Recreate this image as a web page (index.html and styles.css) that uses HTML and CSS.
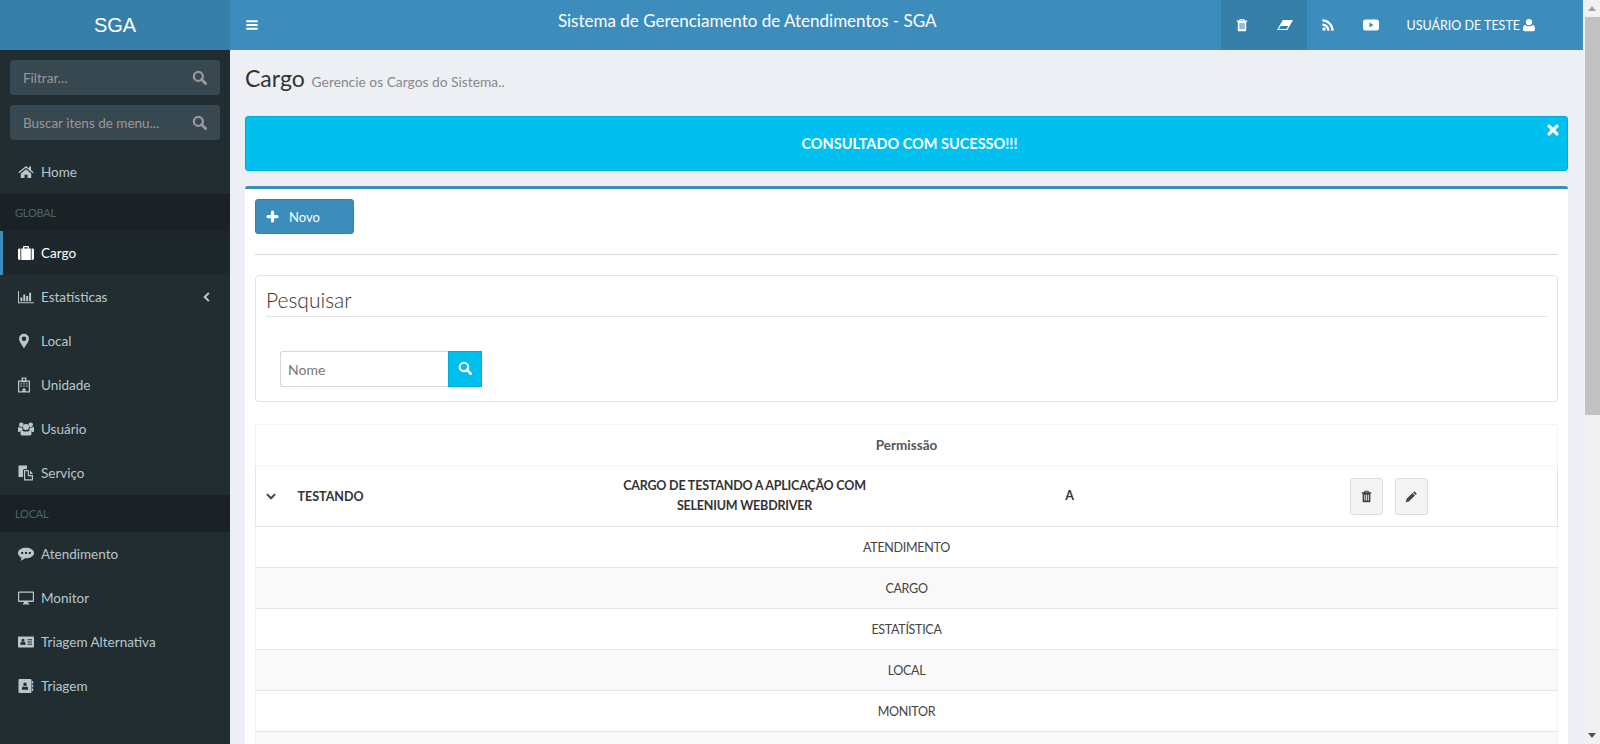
FILE: index.html
```html
<!DOCTYPE html>
<html>
  <head>
    <title>SGA</title>
    <link rel="stylesheet" href="styles.css">
  </head>
  <body>
    <svg class="sprite" xmlns="http://www.w3.org/2000/svg">
      <symbol id="i-search" viewBox="0 0 16 16"><circle cx="6.800" cy="6.800" r="4.800" fill="none" stroke="currentColor" stroke-width="2.400"/><path d="M10.200 10.200l4.300 4.300" stroke="currentColor" stroke-width="3" stroke-linecap="round"/></symbol>
      <symbol id="i-bars" viewBox="0 0 16 16"><path fill="currentColor" d="M1.500 2.500h13v2.400h-13zM1.500 6.800h13v2.400h-13zM1.500 11.100h13v2.400h-13z"/></symbol>
      <symbol id="i-trash" viewBox="0 0 16 16"><path fill="currentColor" fill-rule="evenodd" d="M5.600 1h4.800l1 1.800H14v1.500h-1.200V14a1 1 0 0 1-1 1H4.200a1 1 0 0 1-1-1V4.300H2V2.800h2.600zM6.300 2.800h3.400l-.4-.7H6.700zM5.300 5.800v7h1.100v-7zM7.500 5.800v7h1.100v-7zM9.700 5.800v7h1.100v-7z"/></symbol>
      <symbol id="i-eraser" viewBox="0 0 16 16"><path fill="currentColor" fill-rule="evenodd" d="M5.800 3H16L10.400 13H0zM3.600 9L1.900 12h7.700l1.700-3z"/></symbol>
      <symbol id="i-rss" viewBox="0 0 16 16"><circle cx="3.500" cy="12.500" r="2" fill="currentColor"/><path fill="currentColor" d="M1.500 6.200v2.600a5.700 5.700 0 0 1 5.700 5.700h2.600a8.300 8.300 0 0 0-8.300-8.300zM1.500 1.500v2.600a10.400 10.400 0 0 1 10.400 10.400h2.600a13 13 0 0 0-13-13z"/></symbol>
      <symbol id="i-youtube" viewBox="0 0 16 16"><path fill="currentColor" fill-rule="evenodd" d="M2.500 2.500h11A2.500 2.500 0 0 1 16 5v6a2.500 2.500 0 0 1-2.500 2.500h-11A2.500 2.500 0 0 1 0 11V5a2.500 2.500 0 0 1 2.500-2.500zM6.400 5.600v4.800L10.600 8z"/></symbol>
      <symbol id="i-user" viewBox="0 0 16 16"><circle cx="8" cy="4.600" r="3.600" fill="currentColor"/><path fill="currentColor" d="M3.600 7.600c1 1.200 2.700 1.900 4.400 1.900s3.400-.7 4.400-1.900c1.500.5 2.600 2.300 2.600 5.200 0 1.500-1 2.200-2.300 2.200H3.300C2 15 1 14.300 1 12.800c0-2.900 1.100-4.700 2.600-5.200z"/></symbol>
      <symbol id="i-times" viewBox="0 0 16 16"><path d="M3.500 3.500l9 9M12.500 3.500l-9 9" stroke="currentColor" stroke-width="3.800" stroke-linecap="round"/></symbol>
      <symbol id="i-home" viewBox="0 0 16 16"><path fill="currentColor" d="M8 2L.3 8.300l.9 1L8 3.700l6.800 5.600.9-1L13 6.100V2.600h-2v1.800zM2.800 9.500V14h3.700v-3.300h3V14h3.700V9.500L8 5.200z"/></symbol>
      <symbol id="i-suitcase" viewBox="0 0 16 16"><path fill="currentColor" fill-rule="evenodd" d="M5 3.500V2A1 1 0 0 1 6 1h4a1 1 0 0 1 1 1v1.500h1.800V15H3.200V3.500zM6.200 2.200v1.300h3.600V2.200zM2.400 3.500V15H1.400A1.400 1.400 0 0 1 0 13.600V4.900A1.400 1.400 0 0 1 1.400 3.500zM13.600 3.500h1A1.400 1.400 0 0 1 16 4.900v8.700a1.400 1.400 0 0 1-1.400 1.400h-1z"/></symbol>
      <symbol id="i-chart" viewBox="0 0 16 16"><path fill="currentColor" d="M0 2h1v11.200h15v1H0zM2.400 8.500h2v3.700h-2zM5.300 5.500h2v6.700h-2zM8.200 7h2v5.200h-2zM11.100 3.800h2v8.400h-2z"/></symbol>
      <symbol id="i-marker" viewBox="0 0 16 16"><path fill="currentColor" fill-rule="evenodd" d="M6 .8a5 5 0 0 0-5 5c0 2.800 3.200 7 5 9.400 1.800-2.400 5-6.600 5-9.400a5 5 0 0 0-5-5zM6 3.500a2.300 2.300 0 1 1 0 4.600 2.300 2.300 0 0 1 0-4.600z"/></symbol>
      <symbol id="i-hospital" viewBox="0 0 16 16"><path fill="currentColor" fill-rule="evenodd" d="M3.500.5h5V3.500H12v12H0V3.500h3.500zM5.400 1.200v.8h-.8v.8h.8v.8h1.200v-.8h.8V2h-.8v-.8zM1.200 4.700v9.600h3.300v-2.800h3v2.800h3.300V4.700H8.500v.6h-5v-.6zM2.400 6.300h1.300v1.200H2.400zM5.300 6.300h1.400v1.200H5.300zM8.300 6.300h1.300v1.200H8.300zM2.400 8.600h1.300v1.200H2.400zM5.300 8.600h1.400v1.200H5.300zM8.300 8.600h1.300v1.200H8.300z"/></symbol>
      <symbol id="i-users" viewBox="0 0 16 16"><circle cx="8" cy="6" r="3" fill="currentColor"/><circle cx="3.300" cy="3.800" r="2.300" fill="currentColor"/><circle cx="12.700" cy="3.800" r="2.300" fill="currentColor"/><path fill="currentColor" d="M3.800 9c1 1 2.500 1.500 4.200 1.500s3.200-.5 4.200-1.500c1 .3 1.300 1.800 1.300 3.500 0 1.300-.6 2-1.500 2H4c-.9 0-1.500-.7-1.500-2 0-1.700.3-3.200 1.300-3.500zM0 6.800c0-.6.300-1 1-.8.700.4 1.400.6 2.200.6l1 .1c.1 1 .4 1.500.9 2-1.700.2-2.700 1-3 2.300H1c-.6 0-1-.4-1-1zM16 6.800c0-.6-.3-1-1-.8-.7.400-1.400.6-2.200.6l-1 .1c-.1 1-.4 1.500-.9 2 1.700.2 2.700 1 3 2.300h1.100c.6 0 1-.4 1-1z"/></symbol>
      <symbol id="i-files" viewBox="0 0 16 16"><path fill="currentColor" fill-rule="evenodd" d="M.5.500h8.500v3.500H6.500A1.500 1.500 0 0 0 5 5.500V12H.5zM6 5h5v5h4v5.500H6zM7.200 6.200v8.100h6.600V11.200H9.800V6.200zM12 5.200l3 3.800h-3z"/></symbol>
      <symbol id="i-comment" viewBox="0 0 16 16"><path fill="currentColor" fill-rule="evenodd" d="M8 1.800c4.200 0 8 2 8 5.200s-3.800 5.300-8 5.300h-1C5.800 13.500 4 14.500 2.200 14.700c.8-.8 1.300-1.800 1.400-3C1.500 10.800 0 9.100 0 7c0-3.200 3.800-5.200 8-5.200zM3.200 6v2h2V6zM7 6v2h2V6zM10.800 6v2h2V6z"/></symbol>
      <symbol id="i-desktop" viewBox="0 0 16 16"><path fill="currentColor" fill-rule="evenodd" d="M1 1.500h14a1 1 0 0 1 1 1V11a1 1 0 0 1-1 1H10l.4 1.500h1v1H4.600v-1h1L6 12H1a1 1 0 0 1-1-1V2.500a1 1 0 0 1 1-1zM1.200 2.800v7.800h13.600V2.800z"/></symbol>
      <symbol id="i-card" viewBox="0 0 16 16"><path fill="currentColor" fill-rule="evenodd" d="M.8 2.500h14.400a.8.800 0 0 1 .8.800v9.400a.8.800 0 0 1-.8.800H.8a.8.800 0 0 1-.8-.8V3.300a.8.800 0 0 1 .8-.8zM5 4.700a1.500 1.500 0 1 0 0 3 1.500 1.500 0 0 0 0-3zM2.300 10.800h5.400c0-1.800-.6-2.800-1.300-3a2.500 2.500 0 0 1-2.800 0c-.7.200-1.300 1.200-1.300 3zM9.500 5.300v1h4.500v-1zM9.500 7.500v1h4.500v-1zM9.500 9.700v1h4.500v-1z"/></symbol>
      <symbol id="i-book" viewBox="0 0 16 16"><path fill="currentColor" fill-rule="evenodd" d="M1.500 1h11a1 1 0 0 1 1 1v12a1 1 0 0 1-1 1h-11a1 1 0 0 1-1-1V2a1 1 0 0 1 1-1zM7 4.500a1.800 1.800 0 1 0 0 3.600 1.800 1.800 0 0 0 0-3.600zM3.800 11.800h6.400c0-2-.6-3.300-1.400-3.600a2.800 2.800 0 0 1-3.600 0c-.8.300-1.400 1.600-1.400 3.600zM14 3h1.200v2.500H14zM14 6.800h1.200v2.500H14zM14 10.500h1.200V13H14z"/></symbol>
      <symbol id="i-plus" viewBox="0 0 16 16"><path d="M8 2.500v11M2.500 8h11" stroke="currentColor" stroke-width="4" stroke-linecap="round"/></symbol>
      <symbol id="i-chev-down" viewBox="0 0 16 16"><path d="M2.500 5.500L8 11l5.500-5.500" fill="none" stroke="currentColor" stroke-width="2.600"/></symbol>
      <symbol id="i-chev-left" viewBox="0 0 16 16"><path d="M10.500 2.500L5 8l5.500 5.500" fill="none" stroke="currentColor" stroke-width="2.800"/></symbol>
      <symbol id="i-pencil" viewBox="0 0 16 16"><path fill="currentColor" d="M11.500 1.500l3 3-1.500 1.500-3-3zM9.200 3.700l3 3-7.500 7.500-3.700.8.800-3.800z"/></symbol>
    </svg>

    <div class="page">
      <header class="logo">SGA</header>
      <nav class="topbar">
        <a class="toggle"><svg class="ic"><use href="#i-bars"/></svg></a>
        <div class="system-title">Sistema de Gerenciamento de Atendimentos - SGA</div>
        <ul class="top-menu">
          <li class="active"><svg class="ic"><use href="#i-trash"/></svg></li>
          <li class="active"><svg class="ic wide"><use href="#i-eraser"/></svg></li>
          <li><svg class="ic"><use href="#i-rss"/></svg></li>
          <li><svg class="ic wide"><use href="#i-youtube"/></svg></li>
          <li class="user">USUÁRIO DE TESTE<svg class="ic"><use href="#i-user"/></svg></li>
        </ul>
      </nav>

      <aside class="sidebar">
        <div class="side-search">Filtrar...<svg class="ic"><use href="#i-search"/></svg></div>
        <div class="side-search">Buscar itens de menu...<svg class="ic"><use href="#i-search"/></svg></div>
        <ul class="side-menu">
          <li><svg class="ic"><use href="#i-home"/></svg>Home</li>
          <li class="side-header">GLOBAL</li>
          <li class="active"><svg class="ic"><use href="#i-suitcase"/></svg>Cargo</li>
          <li><svg class="ic"><use href="#i-chart"/></svg>Estatísticas<svg class="ic arrow"><use href="#i-chev-left"/></svg></li>
          <li><svg class="ic"><use href="#i-marker"/></svg>Local</li>
          <li><svg class="ic"><use href="#i-hospital"/></svg>Unidade</li>
          <li><svg class="ic"><use href="#i-users"/></svg>Usuário</li>
          <li><svg class="ic"><use href="#i-files"/></svg>Serviço</li>
          <li class="side-header">LOCAL</li>
          <li><svg class="ic"><use href="#i-comment"/></svg>Atendimento</li>
          <li><svg class="ic"><use href="#i-desktop"/></svg>Monitor</li>
          <li><svg class="ic"><use href="#i-card"/></svg>Triagem Alternativa</li>
          <li><svg class="ic"><use href="#i-book"/></svg>Triagem</li>
        </ul>
      </aside>

      <main class="content">
        <h1>Cargo <small>Gerencie os Cargos do Sistema..</small></h1>

        <div class="alert">
          CONSULTADO COM SUCESSO!!!
          <svg class="ic alert-close"><use href="#i-times"/></svg>
        </div>

        <section class="box">
          <button class="btn-new"><svg class="ic"><use href="#i-plus"/></svg>Novo</button>
          <hr>
          <fieldset class="search-panel">
            <legend>Pesquisar</legend>
            <div class="search-group">
              <input type="text" placeholder="Nome">
              <button><svg class="ic"><use href="#i-search"/></svg></button>
            </div>
          </fieldset>

          <table class="grid">
            <colgroup>
              <col class="c-toggle"><col class="c-name"><col class="c-desc"><col class="c-perm"><col>
            </colgroup>
            <thead>
              <tr><th colspan="5">Permissão</th></tr>
            </thead>
            <tbody>
              <tr class="main-row">
                <td class="cell-toggle"><svg class="ic"><use href="#i-chev-down"/></svg></td>
                <td>TESTANDO</td>
                <td class="center"><div class="desc">CARGO DE TESTANDO A APLICAÇÃO COM SELENIUM WEBDRIVER</div></td>
                <td class="center">A</td>
                <td class="actions">
                  <button><svg class="ic"><use href="#i-trash"/></svg></button>
                  <button><svg class="ic"><use href="#i-pencil"/></svg></button>
                </td>
              </tr>
              <tr class="sub"><td colspan="5">ATENDIMENTO</td></tr>
              <tr class="sub odd"><td colspan="5">CARGO</td></tr>
              <tr class="sub"><td colspan="5">ESTATÍSTICA</td></tr>
              <tr class="sub odd"><td colspan="5">LOCAL</td></tr>
              <tr class="sub"><td colspan="5">MONITOR</td></tr>
              <tr class="sub odd"><td colspan="5"></td></tr>
            </tbody>
          </table>
        </section>
      </main>
    </div>

    <div class="scrollbar">
      <span class="arrow-up"></span>
      <div class="thumb-area"><div class="thumb"></div></div>
      <span class="arrow-down"></span>
    </div>
  </body>
</html>
```

FILE: styles.css
```css
* {
  box-sizing: border-box;
}

html, body {
  height: 100%;
  margin: 0;
  overflow: hidden;
}

body {
  display: flex;
  font-family: "Lato", "Noto Sans", sans-serif;
  font-size: 14px;
  color: #333;
  background: #ecf0f5;
}

.sprite {
  display: none;
}

.ic {
  width: 14px;
  height: 14px;
  flex: none;
}

.ic.wide {
  width: 16px;
  height: 16px;
}

ul {
  list-style: none;
  margin: 0;
  padding: 0;
}

.page {
  flex: 1;
  min-width: 0;
  display: grid;
  grid-template-columns: 230px 1fr;
  grid-template-rows: 50px 1fr;
}

/* header */
.logo {
  background: #367fa9;
  color: #fff;
  font-family: "Liberation Sans", Arial, sans-serif;
  font-size: 20px;
  line-height: 50px;
  text-align: center;
}

.topbar {
  background: #3c8dbc;
  color: #fff;
  display: flex;
  height: 50px;
}

.toggle {
  padding: 18px 15px;
  height: 50px;
}

.system-title {
  flex: 1;
  font-size: 17px;
  padding-top: 10px;
  text-align: center;
}

.top-menu {
  display: flex;
  margin-right: 33px;
}

.top-menu li {
  display: flex;
  align-items: center;
  justify-content: center;
  width: 43px;
}

.top-menu li.active {
  background: #367fa9;
}

.top-menu li.user {
  width: auto;
  padding: 0 14px 0 14px;
  font-size: 12.5px;
  gap: 2px;
}

/* sidebar */
.sidebar {
  background: #222d32;
  color: #b8c7ce;
  padding-top: 10px;
  min-height: 0;
  font-size: 13.5px;
}

.side-search {
  display: flex;
  align-items: center;
  justify-content: space-between;
  height: 35px;
  margin: 0 10px 10px;
  padding: 0 13px;
  background: #374850;
  border-radius: 3px;
  color: #999;
}

.side-search .ic {
  width: 15px;
  height: 15px;
  color: #999;
}

.side-menu li {
  display: flex;
  align-items: center;
  height: 44px;
  padding: 0 0 1px 18px;
}

.side-menu li > .ic {
  width: 16px;
  height: 16px;
  margin-right: 7px;
}

.side-menu li.side-header {
  height: 37px;
  padding: 0 0 0 15px;
  background: #1a2226;
  color: #4b646f;
  font-size: 11px;
  letter-spacing: -0.2px;
}

.side-menu li.active {
  background: #1e282c;
  border-left: 3px solid #3c8dbc;
  padding-left: 15px;
  color: #fff;
}

.side-menu li > .arrow {
  width: 12px;
  height: 12px;
  margin: 0 17px 0 auto;
}

/* content */
.content {
  padding: 0 15px;
  min-width: 0;
  min-height: 0;
  overflow: hidden;
}

h1 {
  margin: 0;
  padding-top: 12px;
  height: 66px;
  font-size: 23px;
  font-weight: 400;
  line-height: 32px;
}

h1 small {
  font-size: 13.8px;
  font-weight: 400;
  color: #888;
  padding-left: 1px;
}

.alert {
  position: relative;
  height: 55px;
  padding-left: 6px;
  line-height: 54px;
  background: #00c0ef;
  border: 1px solid #00acd6;
  border-radius: 3px;
  color: #fff;
  font-size: 14.5px;
  font-weight: 700;
  text-align: center;
}

.alert-close {
  position: absolute;
  top: 6px;
  right: 7px;
}

.box {
  margin-top: 15px;
  padding: 10px;
  background: #fff;
  border-top: 3px solid #3c8dbc;
  border-radius: 3px;
}

.btn-new {
  display: flex;
  align-items: center;
  width: 99px;
  height: 35px;
  padding: 0 10px;
  background: #3c8dbc;
  border: 1px solid #367fa9;
  border-radius: 3px;
  color: #fff;
  font-family: inherit;
  font-size: 13px;
}

.btn-new .ic {
  width: 13px;
  height: 13px;
  margin-right: 10px;
}

hr {
  margin: 20px 0;
  border: 0;
  border-top: 1px solid #d2d6de;
}

.search-panel {
  margin: 0;
  padding: 0 10px;
  height: 127px;
  border: 1px solid #e2e2e2;
  border-radius: 4px;
}

.search-panel legend {
  display: block;
  float: left;
  width: 100%;
  padding: 0;
  height: 41px;
  line-height: 48px;
  font-size: 21px;
  font-weight: 300;
  border-bottom: 1px solid #e5e5e5;
  color: #333;
}

.search-group {
  clear: both;
  display: flex;
  padding: 34px 0 0 14px;
}

.search-group input {
  width: 168px;
  height: 36px;
  padding: 0 7px;
  border: 1px solid #d2d6de;
  border-right: 0;
  border-radius: 3px 0 0 3px;
  font-family: inherit;
  font-size: 14px;
}

.search-group input::placeholder {
  color: #777;
}

.search-group button {
  width: 34px;
  height: 36px;
  padding: 0;
  background: #00c0ef;
  border: 1px solid #00acd6;
  color: #fff;
}

.grid {
  width: 100%;
  margin-top: 22px;
  border-collapse: collapse;
  table-layout: fixed;
  color: #333;
}

.c-toggle {
  width: 41px;
}

.c-name {
  width: 204px;
}

.c-desc {
  width: 488px;
}

.c-perm {
  width: 162px;
}

.grid th {
  height: 41px;
  padding-bottom: 2px;
  color: #555;
  font-size: 13.5px;
  font-weight: 700;
  text-align: center;
  border: 1px solid #f4f4f4;
}

.main-row td {
  height: 61px;
  font-size: 12.5px;
  font-weight: 700;
  border-top: 1px solid #f4f4f4;
  border-bottom: 1px solid #e2e4e8;
}

.main-row td:first-child {
  border-left: 1px solid #e6e6e6;
}

.main-row td:last-child {
  border-right: 1px solid #e6e6e6;
}

.grid .center {
  text-align: center;
  line-height: 20px;
}

.desc {
  width: 260px;
  margin: 0 auto;
  letter-spacing: -0.2px;
}

.cell-toggle {
  padding-left: 9px;
  color: #444;
}

.cell-toggle .ic {
  width: 12px;
  height: 12px;
  display: block;
}

.actions {
  padding-left: 199px;
}

.actions button {
  width: 33px;
  height: 37px;
  padding: 0;
  margin-right: 9px;
  background: #f4f4f4;
  border: 1px solid #ddd;
  border-radius: 3px;
  color: #444;
  vertical-align: middle;
}

.actions .ic {
  width: 13px;
  height: 13px;
  display: block;
  margin: 0 auto;
}

.sub td {
  height: 41px;
  padding-bottom: 1px;
  text-align: center;
  font-size: 12.5px;
  letter-spacing: -0.3px;
  color: #444;
  border-bottom: 1px solid #e2e4e8;
  border-right: 1px solid #f4f4f4;
  border-left: 1px solid #f4f4f4;
}

.sub.odd td {
  background: #f9f9f9;
}

/* the page scrollbar */
.scrollbar {
  width: 17px;
  flex: none;
  display: flex;
  flex-direction: column;
  align-items: center;
  background: #f1f1f1;
}

.arrow-up, .arrow-down {
  flex: none;
  width: 0;
  height: 0;
  margin: 6px 0;
  border-left: 4px solid transparent;
  border-right: 4px solid transparent;
}

.arrow-up {
  border-bottom: 5px solid #a3a3a3;
}

.arrow-down {
  border-top: 5px solid #505050;
}

.thumb-area {
  flex: 1;
  align-self: stretch;
}

.thumb {
  height: 398px;
  margin-left: 2px;
  background: #c1c1c1;
}
```
